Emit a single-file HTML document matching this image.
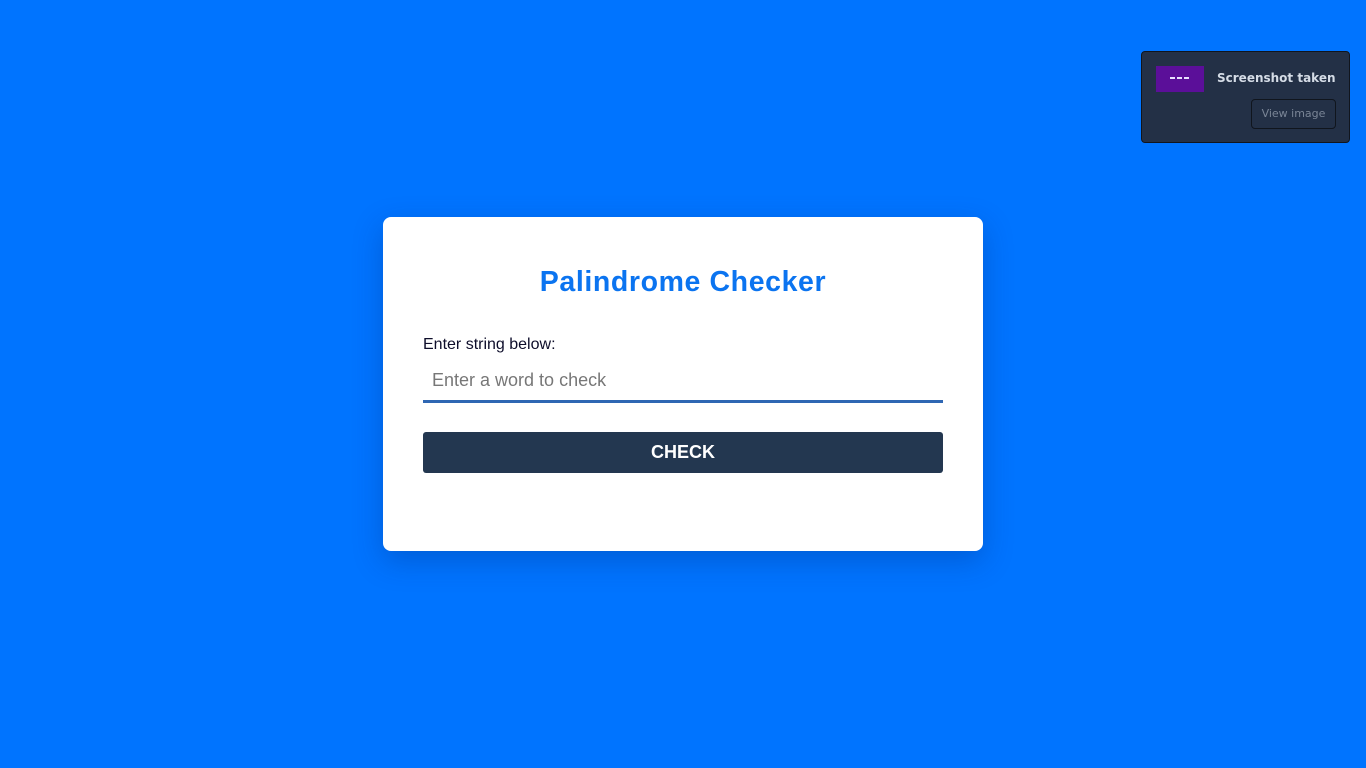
<!DOCTYPE html>
<html><head><meta charset="utf-8"><style>
html,body{margin:0;padding:0;width:1366px;height:768px;background:#0074ff;font-family:"Liberation Sans",sans-serif;overflow:hidden;position:relative}
.card{position:absolute;left:383px;top:217px;width:600px;height:334px;background:#fff;border-radius:8px;box-shadow:0 10px 30px rgba(0,40,120,0.3)}
h1{position:absolute;left:0;right:0;top:264px;margin:0;text-align:center;font-size:28.5px;font-weight:bold;color:#0b74f0;letter-spacing:0.6px;line-height:36px}
.lbl{position:absolute;left:423px;top:335px;font-size:16px;color:#0d0d2a;line-height:19px}
.inp{position:absolute;left:423px;top:364px;width:520px;height:36px;border-bottom:3px solid #2f67b3}
.inp span{position:absolute;left:9px;top:6px;font-size:18px;color:#777;line-height:20px}
.btn{position:absolute;left:423px;top:432px;width:520px;height:41px;background:#233750;border-radius:3px;color:#fff;font-weight:bold;font-size:18px;text-align:center;line-height:40px}
.toast{position:absolute;left:1141px;top:51px;width:207px;height:90px;background:#233046;border:1px solid #11151d;border-radius:4px;font-family:"DejaVu Sans",sans-serif}
.ic{position:absolute;left:14px;top:14px;width:48px;height:26px;background:#5b0f99}
.ic i{position:absolute;top:11px;width:5px;height:2px;background:#e8e0ff}
.tt{position:absolute;left:75px;top:19px;font-size:12px;font-weight:bold;color:#d5dce6}
.vb{position:absolute;left:109px;top:47px;width:83px;height:28px;border:1px solid #10151d;border-radius:4px;font-size:11px;color:#7a8596;text-align:center;line-height:28px}
</style></head><body>
<div class="card"></div>
<h1>Palindrome Checker</h1>
<div class="lbl">Enter string below:</div>
<div class="inp"><span>Enter a word to check</span></div>
<div class="btn">CHECK</div>
<div class="toast"><div class="ic"><i style="left:14px"></i><i style="left:21px"></i><i style="left:28px"></i></div><div class="tt">Screenshot taken</div><div class="vb">View image</div></div>
</body></html>
